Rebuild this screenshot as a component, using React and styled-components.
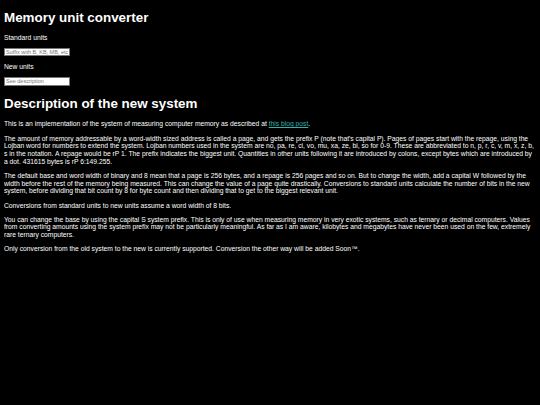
import React from "react";
import styled, { createGlobalStyle } from "styled-components";

const GlobalStyle = createGlobalStyle`
  html, body {
    background-color: #000;
  }
  body {
    margin: 4px;
    color: #fff;
    font-family: "Liberation Sans", Arial, sans-serif;
    font-size: 6.74px;
    line-height: 7.6px;
  }
`;

const Page = styled.main`
  display: block;
`;

const Heading = styled.h1`
  font-size: 13.4px;
  font-weight: bold;
  line-height: 15.5px;
  margin: ${(p) => p.$top}px 0 8.9px;
`;

const Label = styled.p`
  margin: 6.5px 0;
`;

const Field = styled.input`
  display: block;
  width: 66px;
  height: 8.5px;
  box-sizing: border-box;
  margin: 1.2px 0 0;
  padding: 0 1px;
  border: 0.5px solid #767676;
  background-color: #fff;
  font-family: "Liberation Sans", Arial, sans-serif;
  font-size: 5.5px;
  &::placeholder {
    color: #757575;
  }
`;

const Text = styled.p`
  margin: 6.78px 0;
`;

const Link = styled.a`
  color: #2fb3aa;
  text-decoration: underline;
`;

const App = () => {
  return (
    <>
      <GlobalStyle />
      <Page>
        <Heading $top={5.5}>Memory unit converter</Heading>
        <Label>Standard units</Label>
        <Field placeholder="Suffix with B, KB, MB, etc" />
        <Label>New units</Label>
        <Field placeholder="See description" />
        <Heading as="h2" $top={10.5}>
          Description of the new system
        </Heading>
        <Text>
          This is an implementation of the system of measuring computer memory
          as described at <Link href="#">this blog post</Link>.
        </Text>
        <Text>
          The amount of memory addressable by a word-width sized address is
          called a page, and gets the prefix P (note that's capital P). Pages of
          pages start with the repage, using the Lojban word for numbers to
          extend the system. Lojban numbers used in the system are no, pa, re,
          ci, vo, mu, xa, ze, bi, so for 0-9. These are abbreviated to n, p, r,
          c, v, m, x, z, b, s in the notation. A repage would be rP 1. The prefix
          indicates the biggest unit. Quantities in other units following it are
          introduced by colons, except bytes which are introduced by a dot.
          431615 bytes is rP 6:149.255.
        </Text>
        <Text>
          The default base and word width of binary and 8 mean that a page is
          256 bytes, and a repage is 256 pages and so on. But to change the
          width, add a capital W followed by the width before the rest of the
          memory being measured. This can change the value of a page quite
          drastically. Conversions to standard units calculate the number of
          bits in the new system, before dividing that bit count by 8 for byte
          count and then dividing that to get to the biggest relevant unit.
        </Text>
        <Text>
          Conversions from standard units to new units assume a word width of 8
          bits.
        </Text>
        <Text>
          You can change the base by using the capital S system prefix. This is
          only of use when measuring memory in very exotic systems, such as
          ternary or decimal computers. Values from converting amounts using the
          system prefix may not be particularly meaningful. As far as I am
          aware, kilobytes and megabytes have never been used on the few,
          extremely rare ternary computers.
        </Text>
        <Text>
          Only conversion from the old system to the new is currently supported.
          Conversion the other way will be added Soon™.
        </Text>
      </Page>
    </>
  );
};

export default App;
